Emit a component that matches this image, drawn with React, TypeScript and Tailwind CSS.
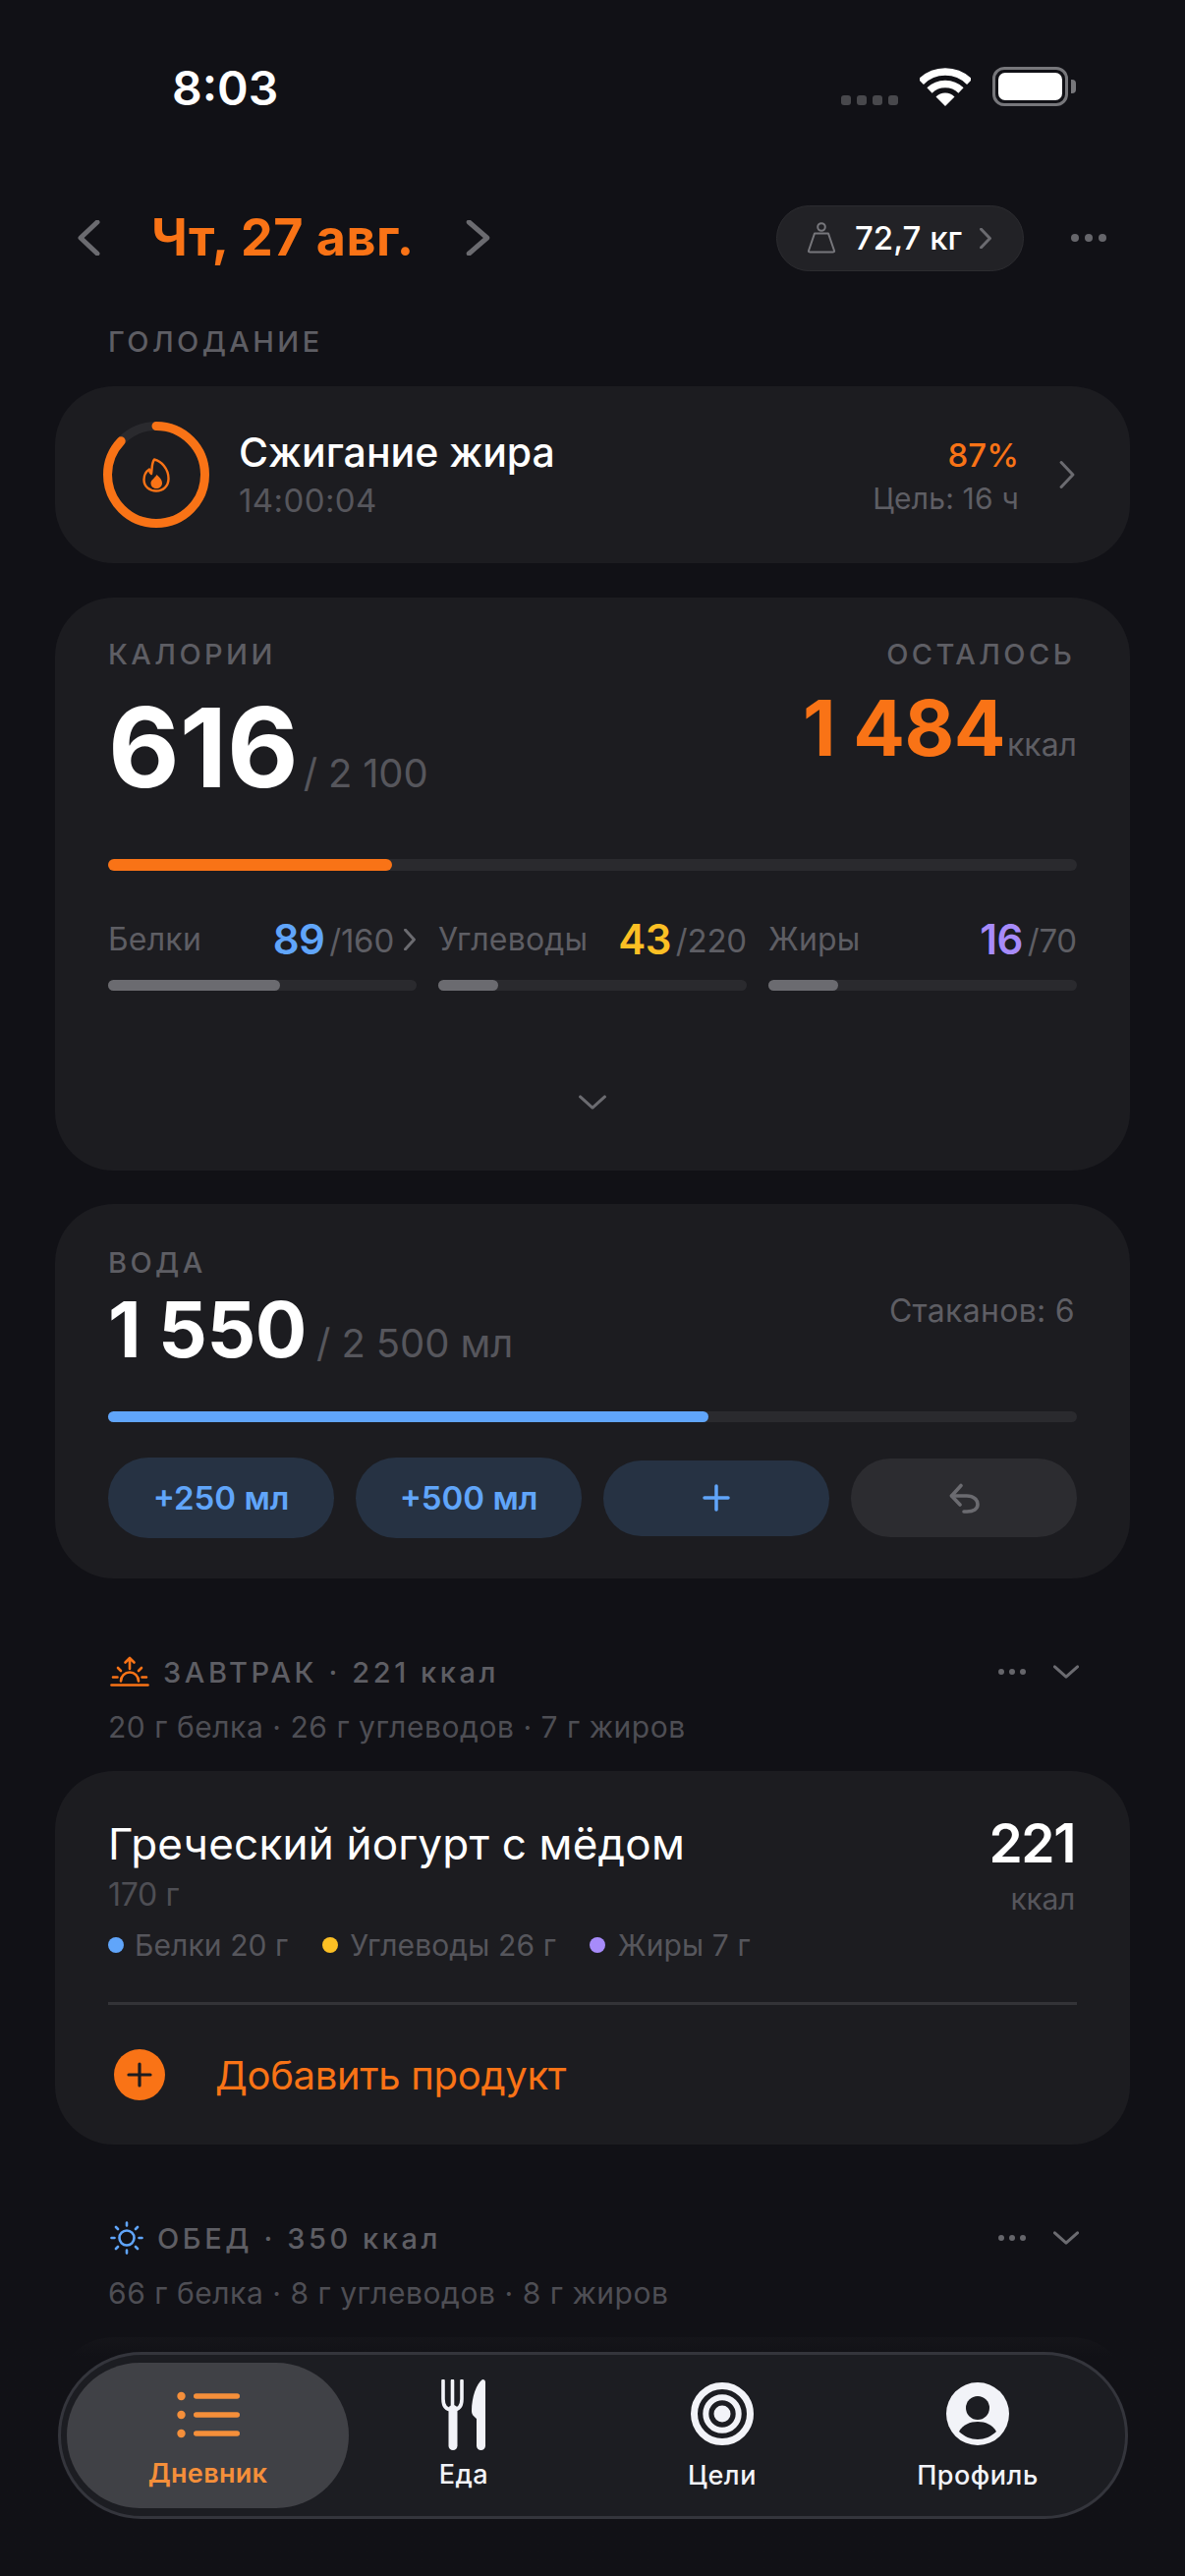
function Chevron({ dir, className, stroke = '#6b6b70', width = 4 }: { dir: 'l' | 'r' | 'd'; className: string; stroke?: string; width?: number }) {
  const pts = dir === 'l' ? '20,2 3,18 20,34' : dir === 'r' ? '3,2 20,18 3,34' : '2,3 18,20 34,3';
  const box = dir === 'd' ? '0 0 36 23' : '0 0 23 36';
  return (
    <svg viewBox={box} className={className} fill="none" preserveAspectRatio="none">
      <polyline points={pts} stroke={stroke} strokeWidth={width} strokeLinecap="round" strokeLinejoin="round" vectorEffect="non-scaling-stroke" />
    </svg>
  );
}

function Dots({ small }: { small?: boolean }) {
  const cls = small ? 'w-[6px] h-[6px] rounded-full bg-[#66666b]' : 'w-[8px] h-[8px] rounded-full bg-[#66666b]';
  return (
    <div className={small ? 'flex gap-[5px]' : 'flex gap-[6px]'}>
      <span className={cls} />
      <span className={cls} />
      <span className={cls} />
    </div>
  );
}

function StatusBar() {
  return (
    <div className="h-[176px] flex items-center justify-between pl-[175px] pr-[111px]">
      <span className="text-[48px] leading-none font-semibold text-white pt-[4px]">8:03</span>
      <div className="flex items-end gap-[22px]">
        <div className="flex gap-[6px] mb-[1px]">
          <span className="w-[10px] h-[10px] rounded-[3px] bg-[#48484c]" />
          <span className="w-[10px] h-[10px] rounded-[3px] bg-[#48484c]" />
          <span className="w-[10px] h-[10px] rounded-[3px] bg-[#48484c]" />
          <span className="w-[10px] h-[10px] rounded-[3px] bg-[#48484c]" />
        </div>
        <svg viewBox="0 0 52 39" className="w-[52px] h-[39px]" fill="none">
          <path d="M1.3 14.3A35 35 0 0 1 50.7 14.3" stroke="#fff" strokeWidth="7.5" />
          <path d="M10 23A23 23 0 0 1 42 23" stroke="#fff" strokeWidth="7.5" />
          <path d="M26 39L16.5 29.5A13.5 13.5 0 0 1 35.5 29.5Z" fill="#fff" />
        </svg>
        <div className="flex items-center gap-[3px]">
          <div className="w-[77px] h-[40px] rounded-[12px] border-[3px] border-[#77777b] p-[3px]">
            <div className="w-full h-full rounded-[7px] bg-white" />
          </div>
          <span className="w-[5px] h-[14px] rounded-r-[4px] bg-[#77777b]" />
        </div>
      </div>
    </div>
  );
}

function DateHeader() {
  return (
    <div className="mt-[26px] h-[80px] flex items-center pl-[79px] pr-[80px]">
      <Chevron dir="l" className="w-[23px] h-[36px]" width={5} />
      <span className="ml-[52px] text-[52px] leading-none font-bold text-[#f97316] tracking-[0.5px] whitespace-nowrap">Чт, 27 авг.</span>
      <Chevron dir="r" className="ml-[52px] w-[25px] h-[36px]" width={5} />
      <div className="ml-auto h-[67px] w-[252px] rounded-full bg-[#222226] border border-[#2c2c30] flex items-center pl-[30px]">
        <svg viewBox="0 0 30 32" className="w-[30px] h-[32px]" fill="none" stroke="#77777c" strokeWidth="2">
          <circle cx="15" cy="5" r="3.8" />
          <path d="M8 11.5H22L28 29Q28.5 30.5 26.5 30.5H3.5Q1.5 30.5 2 29Z" strokeLinejoin="round" />
        </svg>
        <span className="ml-[19px] text-[33px] leading-none font-medium text-white whitespace-nowrap">72,7 кг</span>
        <Chevron dir="r" className="ml-[18px] w-[12px] h-[21px]" width={3} />
      </div>
      <div className="ml-[48px]">
        <Dots />
      </div>
    </div>
  );
}

function Label({ children }: { children: React.ReactNode }) {
  return <div className="h-[36px] flex items-center text-[29px] leading-none font-medium tracking-[3.4px] text-[#5e5e64] whitespace-nowrap">{children}</div>;
}

function FastingCard() {
  return (
    <div className="mt-[28px] mx-[56px] h-[180px] rounded-[60px] bg-[#1c1c20] flex items-center pl-[49px] pr-[56px]">
      <div className="relative w-[108px] h-[108px] shrink-0">
        <svg viewBox="0 0 108 108" className="w-[108px] h-[108px] -rotate-90" fill="none">
          <circle cx="54" cy="54" r="49.5" stroke="#2a2a2e" strokeWidth="9" />
          <circle cx="54" cy="54" r="49.5" stroke="#f97316" strokeWidth="9" strokeDasharray="270.6 311" strokeLinecap="round" />
        </svg>
        <svg viewBox="0 0 28 35" className="absolute left-[40px] top-[37px] w-[28px] h-[35px]" fill="none">
          <path d="M12 1.5C19 3 26.5 11 26.5 21C26.5 28.5 21 33.5 14 33.5C7 33.5 1.5 29 1.5 22C1.5 17.5 4 13.5 7 11.5C7 13.5 7.5 15 9 16C10 11 9 6 12 1.5Z" stroke="#f97316" strokeWidth="2.4" strokeLinejoin="round" />
          <path d="M14.5 17C18 20 20 22.5 20 25.5C20 29 17.5 31 14 31C10.5 31 8.5 28.5 8.5 25.5C8.5 22.5 12 21 14.5 17Z" fill="#f97316" />
        </svg>
      </div>
      <div className="ml-[30px]">
        <div className="h-[48px] flex items-center text-[41px] leading-none font-medium text-white whitespace-nowrap">Сжигание жира</div>
        <div className="mt-[5px] h-[40px] flex items-center text-[33px] leading-none text-[#56565c] tracking-[0.4px]">14:00:04</div>
      </div>
      <div className="ml-auto flex flex-col items-end">
        <div className="h-[48px] flex items-center text-[33px] leading-none font-medium text-[#f97316]">87%</div>
        <div className="h-[40px] flex items-center text-[30px] leading-none text-[#5e5e64] tracking-[0.2px] whitespace-nowrap">Цель: 16 ч</div>
      </div>
      <Chevron dir="r" className="ml-[41px] w-[16px] h-[28px]" width={3} />
    </div>
  );
}

function Macro({ name, value, total, color, fill, chevron }: { name: string; value: string; total: string; color: string; fill: number; chevron?: boolean }) {
  return (
    <div>
      <div className="h-[44px] flex items-center">
        <span className="text-[32px] leading-none text-[#5e5e64] tracking-[0.2px]">{name}</span>
        <span className={`ml-auto text-[42px] leading-none font-semibold tracking-[-0.6px] ${color}`}>{value}</span>
        <span className="ml-[5px] mt-[2px] text-[33px] leading-none text-[#5e5e64] tracking-[-0.2px]">{total}</span>
        {chevron && <Chevron dir="r" className="ml-[10px] mr-[1px] w-[12px] h-[22px]" width={3} />}
      </div>
      <div className="mt-[19px] h-[11px] rounded-full bg-[#2a2a2e]">
        <div className="h-full rounded-full bg-[#6b6b70]" style={{ width: fill }} />
      </div>
    </div>
  );
}

function CaloriesCard() {
  return (
    <div className="mt-[35px] mx-[56px] h-[583px] rounded-[60px] bg-[#1c1c20] px-[54px] pt-[39px]">
      <div className="flex justify-between pr-[2px]">
        <Label>КАЛОРИИ</Label>
        <Label>ОСТАЛОСЬ</Label>
      </div>
      <div className="mt-[19px] flex items-start justify-between">
        <div className="mt-[2px] flex items-baseline">
          <span className="text-[112px] leading-none font-bold text-white">616</span>
          <span className="ml-[5px] text-[40px] leading-none text-[#56565c] tracking-[-0.2px] whitespace-nowrap">/ 2 100</span>
        </div>
        <div className="flex items-baseline">
          <span className="text-[78px] leading-none font-bold text-[#f97316] tracking-[-0.5px] whitespace-nowrap">1 484</span>
          <span className="ml-[2px] text-[32px] leading-none text-[#5e5e64]">ккал</span>
        </div>
      </div>
      <div className="mt-[58px] h-[12px] rounded-full bg-[#2a2a2e]">
        <div className="h-full w-[289px] rounded-full bg-[#f97316]" />
      </div>
      <div className="mt-[48px] grid grid-cols-3 gap-[22px]">
        <Macro name="Белки" value="89" total="/160" color="text-[#60a5fa]" fill={175} chevron />
        <Macro name="Углеводы" value="43" total="/220" color="text-[#fbbf24]" fill={61} />
        <Macro name="Жиры" value="16" total="/70" color="text-[#a78bfa]" fill={71} />
      </div>
      <div className="mt-[106px] flex justify-center">
        <Chevron dir="d" className="w-[28px] h-[15px]" width={3} />
      </div>
    </div>
  );
}

function WaterCard() {
  return (
    <div className="mt-[34px] mx-[56px] h-[381px] rounded-[60px] bg-[#1c1c20] px-[54px] pt-[41px]">
      <Label>ВОДА</Label>
      <div className="mt-[12px] flex items-start justify-between">
        <div className="flex items-baseline">
          <span className="text-[78px] leading-none font-bold text-white tracking-[-0.5px] whitespace-nowrap">1 550</span>
          <span className="ml-[10px] text-[40px] leading-none text-[#56565c] tracking-[-0.1px] whitespace-nowrap">/ 2 500 мл</span>
        </div>
        <span className="text-[32px] leading-[40px] text-[#5e5e64] tracking-[0.3px] whitespace-nowrap pr-[2px]">Стаканов: 6</span>
      </div>
      <div className="mt-[44px] h-[11px] rounded-full bg-[#2a2a2e]">
        <div className="h-full w-[611px] rounded-full bg-[#60a5fa]" />
      </div>
      <div className="mt-[36px] h-[82px] grid grid-cols-4 gap-[22px] items-center">
        <div className="h-[82px] rounded-full bg-[#263243] flex items-center justify-center text-[33px] leading-none font-semibold text-[#60a5fa]">+250 мл</div>
        <div className="h-[82px] rounded-full bg-[#263243] flex items-center justify-center text-[33px] leading-none font-semibold text-[#60a5fa]">+500 мл</div>
        <div className="h-[77px] rounded-full bg-[#263243] flex items-center justify-center">
          <svg viewBox="0 0 28 28" className="w-[28px] h-[28px]" fill="none" stroke="#60a5fa" strokeWidth="3.5" strokeLinecap="round">
            <path d="M14 2V26M2 14H26" />
          </svg>
        </div>
        <div className="h-[80px] rounded-full bg-[#2c2c30] flex items-center justify-center">
          <svg viewBox="0 0 31 31" className="w-[31px] h-[31px]" fill="none" stroke="#6b6b70" strokeWidth="3.6" strokeLinecap="round" strokeLinejoin="round">
            <path d="M12 2.5L2.5 13L11 22" />
            <path d="M2.5 13H18C25 13 29 17 29 21.5C29 26 25 29 18 29H15" />
          </svg>
        </div>
      </div>
    </div>
  );
}

function SunriseIcon() {
  return (
    <svg viewBox="0 0 40 32" className="w-[40px] h-[32px]" fill="none" stroke="#f97316" strokeWidth="2.6" strokeLinecap="round" strokeLinejoin="round">
      <path d="M1.5 29.5H38.5" />
      <path d="M11 25.5A9 9 0 0 1 29 25.5" />
      <path d="M20 13V2M15.5 6.5L20 2L24.5 6.5" />
      <path d="M3 21.5H7.5M32.5 21.5H37M8 12L11 15M32 12L29 15" />
    </svg>
  );
}

function SunIcon() {
  return (
    <svg viewBox="0 0 34 34" className="w-[34px] h-[34px]" fill="none" stroke="#60a5fa" strokeWidth="2.6" strokeLinecap="round">
      <circle cx="17" cy="17" r="7.5" />
      <path d="M17 1.5V4.5M17 29.5V32.5M1.5 17H4.5M29.5 17H32.5M6 6L8 8M26 26L28 28M6 28L8 26M26 8L28 6" />
    </svg>
  );
}

function MealHeader({ icon, title, sub, iconGap, top }: { icon: React.ReactNode; title: string; sub: string; iconGap: string; top: string }) {
  return (
    <>
      <div className={`${top} mx-[56px] pl-[56px] pr-[52px] h-[40px] flex items-center`}>
        {icon}
        <span className={`${iconGap} text-[29px] leading-none font-medium tracking-[3.6px] text-[#5e5e64] whitespace-nowrap`}>{title}</span>
        <div className="ml-auto">
          <Dots small />
        </div>
        <Chevron dir="d" className="ml-[28px] w-[26px] h-[14px]" width={3} />
      </div>
      <div className="mt-[18px] mx-[56px] pl-[54px] h-[36px] flex items-center text-[30px] leading-none font-normal tracking-[0.55px] text-[#4e4e54] whitespace-nowrap">{sub}</div>
    </>
  );
}

function BreakfastCard() {
  return (
    <div className="mt-[27px] mx-[56px] h-[380px] rounded-[60px] bg-[#1c1c20] px-[54px] pt-[46px]">
      <div className="flex justify-between">
        <div>
          <div className="h-[56px] flex items-center text-[44px] leading-none font-normal text-white tracking-[0.2px] whitespace-nowrap">Греческий йогурт с мёдом</div>
          <div className="mt-[4px] h-[40px] flex items-center text-[32px] leading-none text-[#4e4e54] tracking-[-0.3px]">170 г</div>
        </div>
        <div className="flex flex-col items-end pr-[2px]">
          <div className="text-[55px] leading-none font-semibold text-white tracking-[-1.4px]">221</div>
          <div className="mt-[10px] h-[38px] flex items-center text-[30px] leading-none text-[#56565c] tracking-[-0.3px]">ккал</div>
        </div>
      </div>
      <div className="mt-[9px] h-[38px] flex items-center text-[30px] leading-none text-[#56565c] tracking-[0.1px] whitespace-nowrap">
        <span className="w-[16px] h-[16px] rounded-full bg-[#60a5fa]" />
        <span className="ml-[11px]">Белки 20 г</span>
        <span className="ml-[35px] w-[16px] h-[16px] rounded-full bg-[#fbbf24]" />
        <span className="ml-[12px]">Углеводы 26 г</span>
        <span className="ml-[34px] w-[16px] h-[16px] rounded-full bg-[#a78bfa]" />
        <span className="ml-[13px]">Жиры 7 г</span>
      </div>
      <div className="mt-[39px] h-[3px] bg-[#333337]" />
      <div className="mt-[45px] h-[52px] flex items-center pl-[6px]">
        <div className="w-[52px] h-[52px] rounded-full bg-[#f97316] flex items-center justify-center">
          <svg viewBox="0 0 26 26" className="w-[26px] h-[26px]" fill="none" stroke="#1c1c20" strokeWidth="3.2" strokeLinecap="round">
            <path d="M13 2V24M2 13H24" />
          </svg>
        </div>
        <span className="ml-[51px] mt-[2px] text-[40px] leading-none text-[#f97316] tracking-[-0.3px] whitespace-nowrap">Добавить продукт</span>
      </div>
    </div>
  );
}

function TabItem({ className, label, labelGap, children }: { className: string; label: string; labelGap: string; children: React.ReactNode }) {
  return (
    <div className={`${className} flex flex-col items-center shrink-0`}>
      <div className="h-[72px] flex items-center">{children}</div>
      <span className={`${labelGap} text-[27px] leading-[36px] font-medium text-[#f2f3f8] tracking-[0.5px]`}>{label}</span>
    </div>
  );
}

function TabBar() {
  return (
    <div className="absolute left-[59px] top-[2393px] w-[1089px] h-[170px] rounded-[85px] bg-[#1c1d22] border-[3px] border-[#34353c] flex items-center pl-[6px]">
      <div className="w-[287px] h-[148px] rounded-[74px] bg-[#404146] flex flex-col items-center shrink-0">
        <svg viewBox="0 0 64 48" className="mt-[29px] w-[64px] h-[48px]" fill="#f58f3a">
          <circle cx="4.5" cy="5" r="4.2" />
          <circle cx="4.5" cy="24" r="4.2" />
          <circle cx="4.5" cy="43" r="4.2" />
          <rect x="17" y="2.2" width="47" height="5.6" rx="2.8" />
          <rect x="17" y="21.2" width="47" height="5.6" rx="2.8" />
          <rect x="17" y="40.2" width="47" height="5.6" rx="2.8" />
        </svg>
        <span className="mt-[18px] text-[27px] leading-[36px] font-semibold text-[#f58f3a] tracking-[0.3px]">Дневник</span>
      </div>
      <TabItem className="ml-[36px] w-[162px]" label="Еда" labelGap="mt-[7px]">
        <svg viewBox="0 0 46 72" className="w-[46px] h-[72px]" fill="#f2f3f8">
          <path d="M2 1.5V20Q2 31 11.5 31Q21 31 21 20V1.5M11.5 1.5V31" fill="none" stroke="#f2f3f8" strokeWidth="3.6" strokeLinecap="round" />
          <rect x="7.5" y="26" width="9" height="46" rx="4.5" />
          <path d="M45 3Q45 0 42 0C36 4 31 18 31 32C31 36 33 37 36 40V67.5A4.5 4.5 0 0 0 45 67.5Z" />
        </svg>
      </TabItem>
      <TabItem className="ml-[122px] w-[120px]" label="Цели" labelGap="mt-[9px]">
        <svg viewBox="0 0 64 64" className="w-[64px] h-[64px]" fill="none" stroke="#f2f3f8">
          <circle cx="32" cy="32" r="28.5" strokeWidth="7" />
          <circle cx="32" cy="32" r="16.7" strokeWidth="6" />
          <circle cx="32" cy="32" r="8.5" fill="#f2f3f8" stroke="none" />
        </svg>
      </TabItem>
      <TabItem className="ml-[135px] w-[130px]" label="Профиль" labelGap="mt-[9px]">
        <svg viewBox="0 0 64 64" className="w-[64px] h-[64px]">
          <circle cx="32" cy="32" r="32" fill="#f2f3f8" />
          <circle cx="32" cy="26" r="12" fill="#1c1d22" />
          <path d="M13 50C17 43 24 40 32 40C40 40 47 43 51 50C46 55 39 58 32 58C25 58 18 55 13 50Z" fill="#1c1d22" />
        </svg>
      </TabItem>
    </div>
  );
}

export default function App() {
  return (
    <div className="relative w-[1206px] h-[2621px] overflow-hidden bg-[#111116]" style={{ fontFamily: 'Inter, "Noto Sans", sans-serif' }}>
      <StatusBar />
      <DateHeader />
      <div className="mt-[47px] pl-[110px]">
        <Label>ГОЛОДАНИЕ</Label>
      </div>
      <FastingCard />
      <CaloriesCard />
      <WaterCard />
      <MealHeader top="mt-[75px]" icon={<SunriseIcon />} iconGap="ml-[14px]" title="ЗАВТРАК · 221 ккал" sub="20 г белка · 26 г углеводов · 7 г жиров" />
      <BreakfastCard />
      <MealHeader top="mt-[75px]" icon={<SunIcon />} iconGap="ml-[14px]" title="ОБЕД · 350 ккал" sub="66 г белка · 8 г углеводов · 8 г жиров" />
      <div className="mt-[27px] mx-[56px] h-[400px] rounded-[60px] bg-[#1c1c20]" />
      {/* bottom fade over the list, under the tab bar */}
      <div className="absolute left-0 right-0 top-[2370px] bottom-0 bg-linear-to-b from-[#11111680] via-[#111116] via-[28px] to-[#111116]" />
      <TabBar />
    </div>
  );
}
